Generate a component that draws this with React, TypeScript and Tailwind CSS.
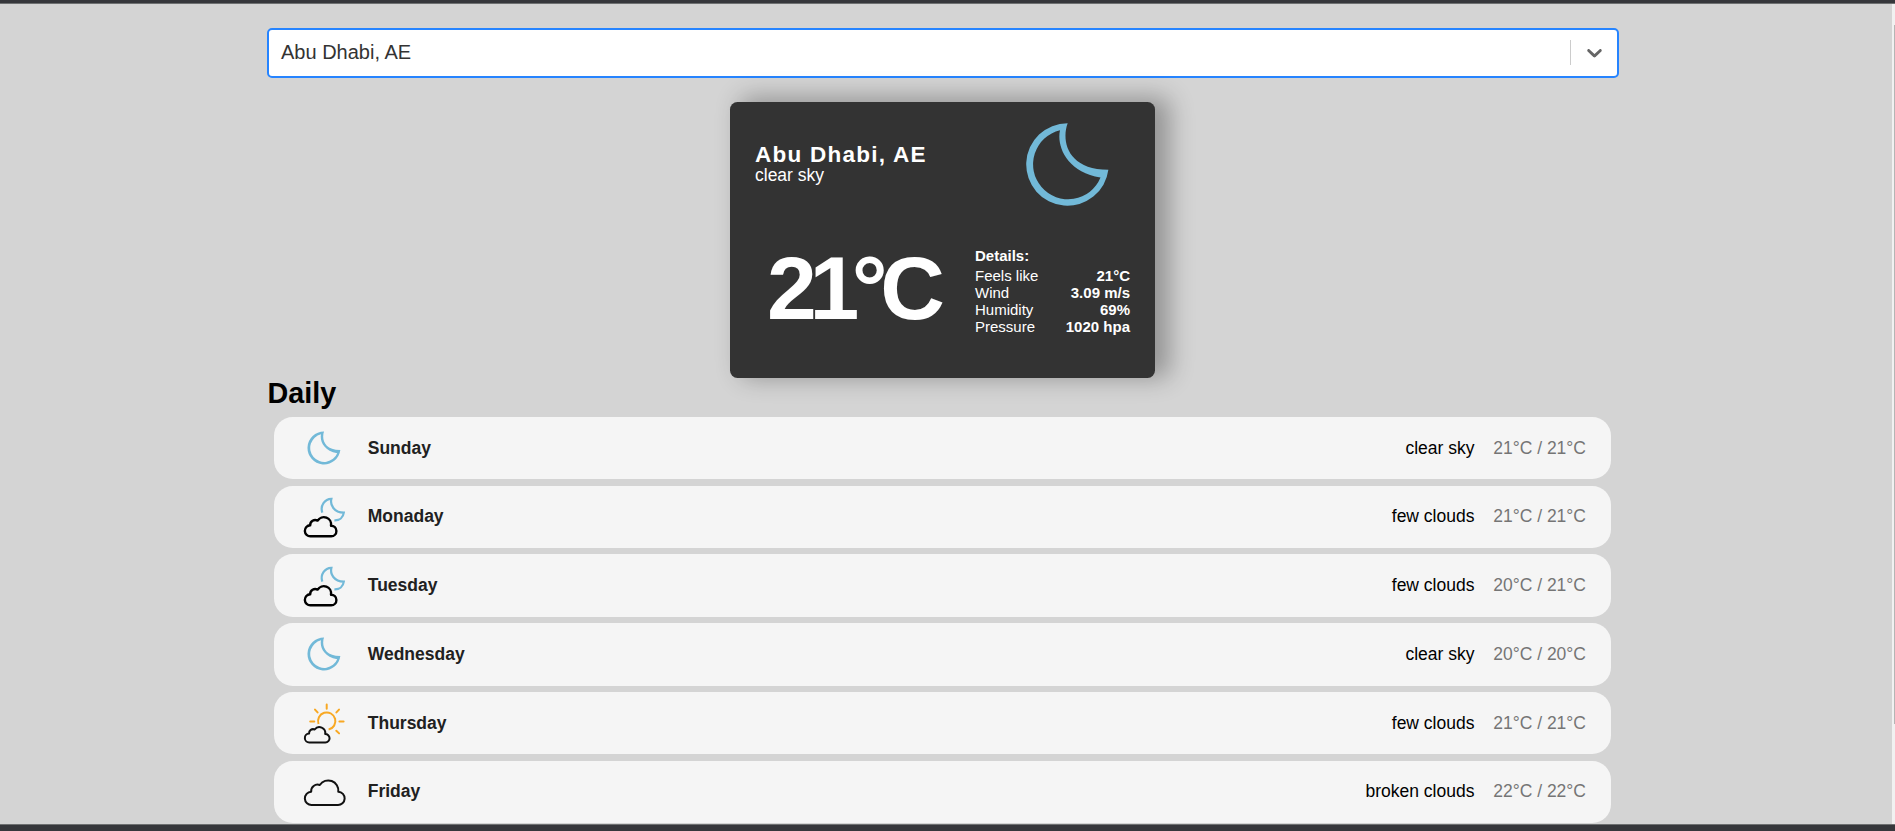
import React from "react";

type IconName = "moon" | "moonCloud" | "sunCloud" | "cloud";

const BLUE = "#72b9d8";
const ORANGE = "#f8a823";

function WeatherIcon({ name, className }: { name: IconName; className: string }) {
  return (
    <svg viewBox="0 0 50 50" fill="none" className={className} aria-hidden="true">
      {name === "moon" && (
        <path
          fill={BLUE}
          fillRule="evenodd"
          d="M25.07 8.5C22.6 15 24.5 27 41.35 27.1A16.5 16.5 0 1 1 25.07 8.5ZM22 11.3A14 14 0 1 0 38.2 30.2C24.5 28 20.6 17.5 22 11.3Z"
        />
      )}
      {name === "moonCloud" && (
        <>
          <path
            stroke={BLUE}
            strokeWidth="2.2"
            d="M23.3 20.6C20.9 13.5 25.8 7 32.4 6.8C30.8 13 35 20.6 44.8 20.7C44.2 25.5 40.5 28.6 35.4 28.4"
          />
          <path
            stroke="#000"
            strokeWidth="2.4"
            strokeLinejoin="round"
            d="M11.6 44.3H32.2A5.3 5.3 0 0 0 32 33.7A7.3 7.3 0 0 0 18.6 28.6A5 5 0 0 0 11.2 33.2A5.5 5.5 0 0 0 11.6 44.3Z"
          />
        </>
      )}
      {name === "sunCloud" && (
        <>
          <g stroke={ORANGE} strokeWidth="2" strokeLinecap="round">
            <path d="M19.5 26A8.7 8.7 0 1 1 29.6 31.6" strokeLinecap="butt" />
            <path d="M27.7 6.6V10.7M11.2 23.4H15.3M40.4 23.4H44.6M16 11.6L18.6 14.4M40 11.6L37.4 14.4M37.3 32.7L40.1 35.4" />
          </g>
          <path
            stroke="#111"
            strokeWidth="2"
            strokeLinejoin="round"
            d="M10.5 44.5H26.4A4.2 4.2 0 0 0 26.2 36A5.9 5.9 0 0 0 15.7 31.5A4 4 0 0 0 10.1 35.6A4.4 4.4 0 0 0 10.5 44.5Z"
          />
        </>
      )}
      {name === "cloud" && (
        <path
          stroke="#111"
          strokeWidth="2"
          strokeLinejoin="round"
          d="M12.8 38H38.7A6.6 6.6 0 0 0 39.3 24.7A10.1 10.1 0 0 0 20.8 18A6.4 6.4 0 0 0 12.2 24.7A6.6 6.6 0 0 0 12.8 38Z"
        />
      )}
    </svg>
  );
}

const details = [
  ["Feels like", "21°C"],
  ["Wind", "3.09 m/s"],
  ["Humidity", "69%"],
  ["Pressure", "1020 hpa"],
];

const days: { day: string; icon: IconName; text: string; range: string }[] = [
  { day: "Sunday", icon: "moon", text: "clear sky", range: "21°C / 21°C" },
  { day: "Monaday", icon: "moonCloud", text: "few clouds", range: "21°C / 21°C" },
  { day: "Tuesday", icon: "moonCloud", text: "few clouds", range: "20°C / 21°C" },
  { day: "Wednesday", icon: "moon", text: "clear sky", range: "20°C / 20°C" },
  { day: "Thursday", icon: "sunCloud", text: "few clouds", range: "21°C / 21°C" },
  { day: "Friday", icon: "cloud", text: "broken clouds", range: "22°C / 22°C" },
];

function CitySelect() {
  return (
    <div className="-mr-px flex h-[50px] items-center rounded-[5px] border-2 border-[#2684ff] bg-white">
      <span className="flex-1 pb-[2px] pl-3 text-[20px] leading-6 text-[#333]">Abu Dhabi, AE</span>
      <span className="mb-px h-[25px] w-px bg-[#ccc]" />
      <span className="flex w-[46px] justify-center">
        <svg viewBox="0 0 20 20" className="mb-px size-[25px] fill-[#666]" aria-hidden="true">
          <path d="M4.516 7.548c0.436-0.446 1.043-0.481 1.576 0l3.908 3.747 3.908-3.747c0.533-0.481 1.141-0.446 1.574 0 0.436 0.445 0.408 1.197 0 1.615-0.406 0.418-4.695 4.502-4.695 4.502-0.217 0.223-0.502 0.335-0.787 0.335s-0.57-0.112-0.789-0.335c0 0-4.287-4.084-4.695-4.502s-0.436-1.17 0-1.615z" />
        </svg>
      </span>
    </div>
  );
}

function CurrentWeather() {
  return (
    <section className="mt-6 ml-[463px] h-[276px] w-[425px] rounded-[7.5px] bg-[#333] px-[25px] text-white shadow-[12.5px_-2.5px_25px_2.5px_rgba(0,0,0,0.3)]">
      <div className="flex h-[125px] items-center justify-between">
        <div>
          <p className="pb-[2px] text-[22.5px] leading-[20.5px] font-bold tracking-[1.25px]">Abu Dhabi, AE</p>
          <p className="text-[17.5px] leading-[17.5px]">clear sky</p>
        </div>
        <WeatherIcon name="moon" className="size-[125px]" />
      </div>
      <div className="flex h-[126px] items-center justify-between">
        <p className="mb-[4px] ml-[12px] text-[89.5px] leading-[100px] font-bold tracking-[-7.4px]">21°C</p>
        <div className="mt-[2px] w-[155px] text-[15px] leading-[17px]">
          <p className="mb-[3px] font-bold">Details:</p>
          {details.map(([label, value]) => (
            <div key={label} className="flex justify-between">
              <span>{label}</span>
              <span className="font-bold">{value}</span>
            </div>
          ))}
        </div>
      </div>
    </section>
  );
}

export default function App() {
  return (
    <div className="flex h-[831px] w-full flex-col overflow-hidden bg-[#d4d4d4] font-['Liberation_Sans',Arial,sans-serif]">
      <div className="h-1 shrink-0 border-b border-[#6e7071] bg-[#36373b]" />
      <div className="flex h-[820px] shrink-0 justify-between overflow-hidden">
        <main className="ml-[267px] w-[1351px] pt-6">
          <CitySelect />
          <CurrentWeather />
          <h2 className="h-[38.9px] pl-[0.5px] text-[28.75px] leading-[31px] font-bold text-black">Daily</h2>
          <ul className="flex flex-col gap-[6.25px] px-[7px]">
            {days.map((d) => (
              <li
                key={d.day}
                className="flex h-[62.5px] shrink-0 items-center rounded-[18.75px] bg-[#f5f5f5] px-[25px] text-[17.5px] leading-5"
              >
                <WeatherIcon name={d.icon} className="size-[50px]" />
                <span className="ml-[18.75px] flex-1 pb-px font-bold text-[#212121]">{d.day}</span>
                <span className="pb-px text-black">{d.text}</span>
                <span className="ml-[18.75px] pb-px text-[#757575]">{d.range}</span>
              </li>
            ))}
          </ul>
        </main>
        <div className="flex w-[3px] justify-end bg-[#f1f1f1] pt-[21px]">
          <div className="h-[699px] w-px bg-[#b5b5b5]" />
        </div>
      </div>
      <div className="flex-1 border-t border-[#6e7071] bg-[#36373b]" />
    </div>
  );
}
